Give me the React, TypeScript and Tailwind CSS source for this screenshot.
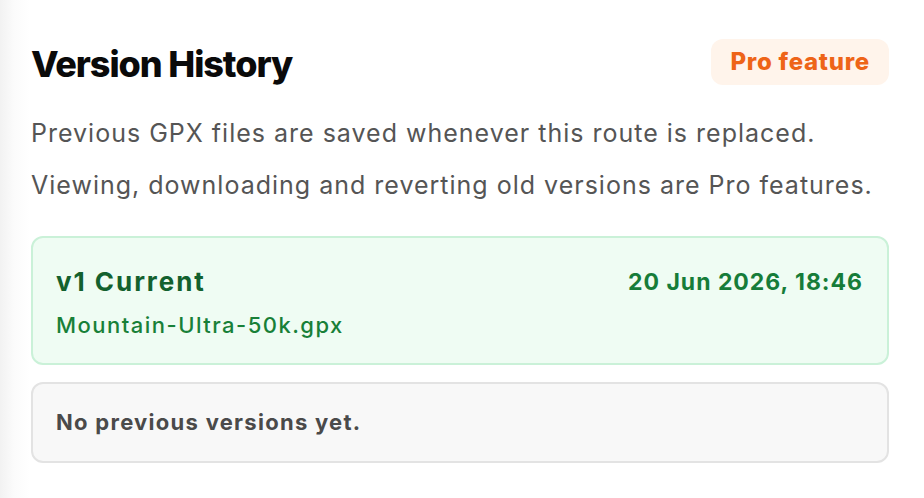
import React from 'react'

const FONT = { fontFamily: 'Inter, "Noto Sans", sans-serif' }

export default function App() {
  return (
    <div
      className="w-[924px] h-[498px] overflow-hidden bg-[linear-gradient(to_right,#f2f2f2_0px,#fbfbfb_14px,#ffffff_30px)]"
      style={FONT}
    >
      <div className="pl-[31px] pr-[35px] pt-[39px]">
        {/* Header */}
        <div className="flex items-start justify-between">
          <h1 className="mt-[3px] text-[36px] leading-[44px] font-extrabold tracking-[-0.03em] text-[#0a0a0a]">
            Version History
          </h1>
          <span className="h-[46px] pl-[20px] pr-[19px] rounded-[12px] bg-[#fff4eb] text-[#ee6418] text-[24px] font-extrabold flex items-center tracking-[0.03em]">
            Pro feature
          </span>
        </div>

        {/* Description */}
        <p className="mt-[21px] text-[25px] leading-[52px] text-[#555555] tracking-[0.04em]">
          Previous GPX files are saved whenever this route is replaced.
          <br />
          Viewing, downloading and reverting old versions are Pro features.
        </p>

        {/* Current version */}
        <div className="mt-[25px] h-[129px] rounded-[12px] border-2 border-[#caf1d8] bg-[#effcf3] pl-[23px] pr-[24px] pt-[27px]">
          <div className="flex items-center justify-between">
            <span className="text-[26px] leading-[34px] font-bold text-[#13612e] tracking-[0.075em]">v1 Current</span>
            <span className="text-[23px] leading-[34px] font-bold text-[#167c39] tracking-[0.043em]">
              20 Jun 2026, 18:46
            </span>
          </div>
          <div className="mt-[12px] text-[22px] leading-[28px] font-medium text-[#188038] tracking-[0.067em]">
            Mountain-Ultra-50k.gpx
          </div>
        </div>

        {/* Empty state */}
        <div className="mt-[17px] h-[81px] rounded-[12px] border-2 border-[#e3e3e3] bg-[#f8f8f8] pl-[23px] flex items-center">
          <span className="text-[22px] font-bold text-[#4a4a4a] tracking-[0.058em]">No previous versions yet.</span>
        </div>
      </div>
    </div>
  )
}
